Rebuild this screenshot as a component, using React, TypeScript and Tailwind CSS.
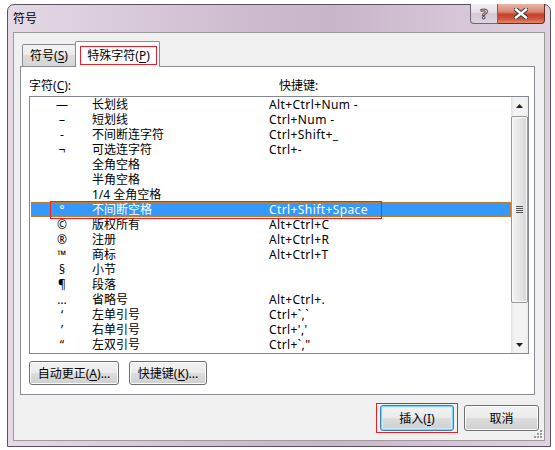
import React from 'react';
import clsx from 'clsx';

type Row = { sym: string; name: string; keys: string };

const rows: Row[] = [
  { sym: '—', name: '长划线', keys: 'Alt+Ctrl+Num -' },
  { sym: '–', name: '短划线', keys: 'Ctrl+Num -' },
  { sym: '‑', name: '不间断连字符', keys: 'Ctrl+Shift+_' },
  { sym: '¬', name: '可选连字符', keys: 'Ctrl+-' },
  { sym: '', name: '全角空格', keys: '' },
  { sym: '', name: '半角空格', keys: '' },
  { sym: '', name: '1/4 全角空格', keys: '' },
  { sym: '°', name: '不间断空格', keys: 'Ctrl+Shift+Space' },
  { sym: '©', name: '版权所有', keys: 'Alt+Ctrl+C' },
  { sym: '®', name: '注册', keys: 'Alt+Ctrl+R' },
  { sym: '™', name: '商标', keys: 'Alt+Ctrl+T' },
  { sym: '§', name: '小节', keys: '' },
  { sym: '¶', name: '段落', keys: '' },
  { sym: '…', name: '省略号', keys: 'Alt+Ctrl+.' },
  { sym: '‘', name: '左单引号', keys: 'Ctrl+`,`' },
  { sym: '’', name: '右单引号', keys: "Ctrl+','" },
  { sym: '“', name: '左双引号', keys: 'Ctrl+`,"' },
];

const SELECTED = 7;

// label with an underlined access key, e.g. 符号(S)
const Mnemonic = ({ pre, k, post = '' }: { pre: string; k: string; post?: string }) => (
  <>
    {pre}(<u className="underline-offset-2">{k}</u>){post}
  </>
);

const Button = ({
  children,
  className,
  isDefault,
}: {
  children: React.ReactNode;
  className?: string;
  isDefault?: boolean;
}) => (
  <button
    className={clsx(
      'flex items-center justify-center rounded-[3px] border leading-[15px] text-black',
      'bg-[linear-gradient(#f2f2f2,#ebebeb_50%,#dddddd_50%,#cfcfcf)]',
      isDefault
        ? 'border-[#3c7fb1] shadow-[inset_0_0_0_1px_#7fd6f7,inset_0_0_0_2px_#c8eefc]'
        : 'border-[#707070] shadow-[inset_0_0_0_1px_#fcfcfc]',
      className
    )}
  >
    {children}
  </button>
);

const Arrow = ({ up }: { up?: boolean }) => (
  <svg width="7" height="4" viewBox="0 0 7 4">
    <path d={up ? 'M3.5 0L7 4H0z' : 'M0 0H7L3.5 4z'} fill="#222" />
  </svg>
);

const ScrollBar = () => (
  <div className="flex w-[17px] flex-col bg-[linear-gradient(90deg,#e3e3e3,#f3f3f3_20%,#f3f3f3_80%,#ebebeb)]">
    <div className="flex h-[18px] items-center justify-center">
      <Arrow up />
    </div>
    <div className="mt-[1px] flex h-[187px] flex-col items-center justify-center gap-[1px] rounded-[2px] border border-[#979797] bg-[linear-gradient(90deg,#f4f4f4,#e8e8e8_45%,#d6d6d6)] shadow-[inset_0_0_0_1px_#fafafa]">
      <span className="h-[1px] w-[7px] bg-[#555]" />
      <span className="h-[1px] w-[7px] bg-[#555]" />
      <span className="h-[1px] w-[7px] bg-[#555]" />
      <span className="h-[1px] w-[7px] bg-[#555]" />
    </div>
    <div className="flex-1" />
    <div className="flex h-[17px] items-center justify-center pt-[1px]">
      <Arrow />
    </div>
  </div>
);

const ListRow = ({ row, selected }: { row: Row; selected: boolean }) => (
  <div className="relative flex h-[15px] pl-[1px]">
    <div
      className={clsx(
        'flex flex-1 items-center leading-[15px]',
        selected && 'bg-[#3399ff] text-white outline-1 -outline-offset-1 outline-dotted outline-[#c97a2a]'
      )}
    >
      <span className="w-[61px] pl-[1px] text-center">{row.sym}</span>
      <span className="w-[177px]">{row.name}</span>
      <span className="tracking-[0.4px]">{row.keys}</span>
    </div>
    {selected && (
      <div className="absolute -top-[1px] left-[20px] h-[18px] w-[332px] border border-[#e8202a]" />
    )}
  </div>
);

const CloseGlyph = () => (
  <svg width="14" height="11" viewBox="0 0 14 11">
    <path d="M2 1.5L12 9.5M12 1.5L2 9.5" stroke="#3a3a3a" strokeWidth="4.4" strokeLinecap="square" />
    <path d="M2 1.5L12 9.5M12 1.5L2 9.5" stroke="#fff" strokeWidth="2.4" strokeLinecap="square" />
  </svg>
);

const ResizeGrip = () => (
  <svg className="absolute bottom-[1px] right-[1px]" width="10" height="10" viewBox="0 0 10 10">
    {[
      [7, 1],
      [4, 4],
      [7, 4],
      [1, 7],
      [4, 7],
      [7, 7],
    ].map(([x, y]) => (
      <g key={`${x}-${y}`}>
        <rect x={x + 1} y={y + 1} width="2" height="2" fill="#fff" />
        <rect x={x} y={y} width="2" height="2" fill="#9a9a9a" />
      </g>
    ))}
  </svg>
);

export default function App() {
  return (
    <div className="h-[450px] w-[555px] overflow-hidden bg-white pl-[7px] pt-[4px] font-['Noto_Sans','Noto_Sans_CJK_SC',sans-serif] text-[12px] text-black">
      <div className="flex h-[443px] w-[544px] flex-col rounded-t-[7px] border border-[#5a5260] bg-[linear-gradient(90deg,#e4d9e5,#cdbace_45%,#c9b5ca_60%,#dfd2e0)]">
        {/* caption */}
        <div className="flex h-[27px] items-start justify-between px-[5px]">
          <span className="mt-[6px] leading-[15px]">符号</span>
          <div className="-mt-[1px] flex h-[20px]">
            <div className="flex w-[28px] items-center justify-center rounded-bl-[4px] border border-t-0 border-[#6e6676] bg-[linear-gradient(#f3eff4,#e2dbe4_50%,#d2c9d4_50%,#dcd4de)] text-[15px] font-bold leading-none text-white [-webkit-text-stroke:1px_#4b4b55]">
              ?
            </div>
            <div className="flex w-[47px] items-center justify-center rounded-br-[4px] border border-l-0 border-t-0 border-[#6b2a22] bg-[linear-gradient(#eab2a4,#d98a76_40%,#c4412c_55%,#d1593f_80%,#e58a6c)]">
              <CloseGlyph />
            </div>
          </div>
        </div>

        {/* client area */}
        <div className="relative mx-[5px] flex h-[409px] flex-col border border-[#9b9b9b] bg-[#f0f0f0]">
          {/* tabs */}
          <div className="mt-[8px] flex h-[25px] items-end pl-[8px]">
            <div className="flex h-[22px] w-[54px] items-center justify-center rounded-t-[2px] border border-b-0 border-[#898c95] bg-[linear-gradient(#f3f3f3,#ebebeb_50%,#dcdcdc_50%,#d6d6d6)] leading-[15px]">
              <Mnemonic pre="符号" k="S" />
            </div>
            <div className="relative z-10 -mb-[1px] -ml-[1px] h-[26px] w-[85px] rounded-t-[2px] border border-b-0 border-[#898c95] bg-white pl-[4px] pt-[4px]">
              <div className="flex h-[19px] w-[77px] items-center justify-center border border-[#e8202a] leading-[15px]">
                <Mnemonic pre="特殊字符" k="P" />
              </div>
            </div>
          </div>

          {/* tab page */}
          <div className="ml-[6px] h-[329px] w-[515px] border border-[#898c95] bg-white">
            <div className="flex pl-[8px] pt-[11px] leading-[15px]">
              <span className="w-[250px]">
                <Mnemonic pre="字符" k="C" post=":" />
              </span>
              <span>快捷键:</span>
            </div>

            <div className="ml-[8px] mt-[3px] flex h-[258px] w-[500px] border border-[#828790] bg-white">
              <div className="flex-1">
                {rows.map((row, i) => (
                  <ListRow key={row.name} row={row} selected={i === SELECTED} />
                ))}
              </div>
              <ScrollBar />
            </div>

            <div className="ml-[8px] mt-[7px] flex gap-[10px]">
              <Button className="h-[24px] w-[90px]">
                <Mnemonic pre="自动更正" k="A" post="..." />
              </Button>
              <Button className="h-[24px] w-[78px]">
                <Mnemonic pre="快捷键" k="K" post="..." />
              </Button>
            </div>
          </div>

          {/* dialog buttons */}
          <div className="mt-[8px] flex items-center justify-end gap-[6px] pr-[5px]">
            <div className="border border-[#e8202a] px-[3px] py-[1px]">
              <Button isDefault className="h-[26px] w-[74px]">
                <Mnemonic pre="插入" k="I" />
              </Button>
            </div>
            <Button className="h-[26px] w-[75px]">取消</Button>
          </div>

          <ResizeGrip />
        </div>
      </div>
    </div>
  );
}
